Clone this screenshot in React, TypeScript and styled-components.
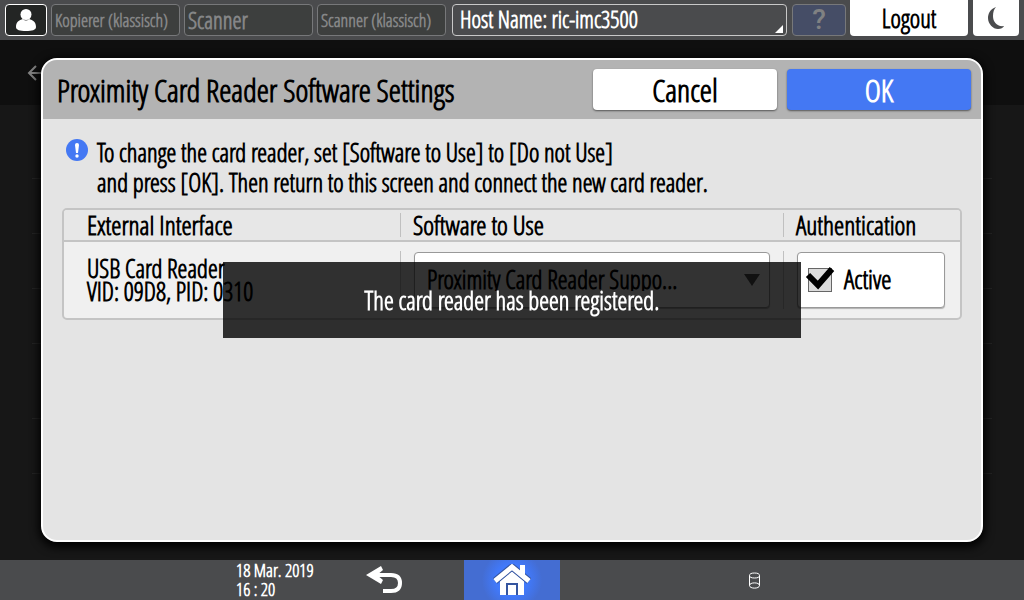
import React from "react";
import styled, { createGlobalStyle } from "styled-components";

const GlobalStyle = createGlobalStyle`
  *, *::before, *::after { box-sizing: border-box; }
  body {
    margin: 0;
    background: #171717;
    color: #000;
    font-family: "Open Sans Condensed Light", "Roboto Condensed", sans-serif;
    font-weight: 600;
    font-size: 25px;
    line-height: 30px;
  }
  button, input, select { font: inherit; color: inherit; margin: 0; padding: 0; }
  svg { display: block; }
`;

const Screen = styled.div`
  display: flex;
  flex-direction: column;
  min-height: 100vh;
`;

const TopBar = styled.header`
  display: flex;
  align-items: flex-start;
  gap: 4px;
  height: 40px;
  padding: 0 5px;
  background: #4a4b4d;
`;

const BarButton = styled.button`
  height: 32px;
  margin-top: 4px;
  border: 1px solid #77787a;
  border-radius: 4px;
`;

const UserButton = styled(BarButton)`
  display: grid;
  place-items: center;
  width: 42px;
  border-color: #fff;
  background: #232524;
`;

const AppButton = styled(BarButton)<{ $small?: boolean }>`
  flex: 0 1 129px;
  padding: 0 3px;
  overflow: hidden;
  white-space: nowrap;
  text-align: left;
  background: #3d3f3e;
  color: #858687;
  font-size: ${(p) => (p.$small ? 18 : 23)}px;
  line-height: 28px;
`;

const StatusButton = styled(BarButton)`
  display: flex;
  flex: 1;
  align-items: flex-end;
  justify-content: space-between;
  margin-left: 2px;
  padding: 0 3px 2px 7px;
  border-color: #c8c8c8;
  background: #4a4b4d;
  color: #fff;
  font-size: 23px;
  line-height: 28px;
  white-space: nowrap;
`;

const HelpButton = styled(BarButton)`
  width: 54px;
  margin-left: 1px;
  background: #454d66;
  color: #808182;
  font-family: Roboto, sans-serif;
  font-weight: 500;
  font-size: 28px;
  line-height: 28px;
`;

const SolidButton = styled.button`
  width: 118px;
  height: 36px;
  border: 0;
  border-radius: 0 0 4px 4px;
  background: #fff;
`;

const SleepButton = styled(SolidButton)`
  display: grid;
  place-items: center;
  width: 46px;
  margin-left: 1px;
`;

const Main = styled.main`
  display: grid;
  flex: 1;
  grid-template: minmax(0, 1fr) / minmax(0, 1fr);
  & > * { grid-area: 1 / 1; }
`;

const Backdrop = styled.div`
  overflow: hidden;
`;

const BackdropHeader = styled.div`
  display: flex;
  align-items: center;
  height: 65px;
  padding-left: 27px;
  background: #0f0f0f;
`;

const BackdropList = styled.ul`
  margin: 0 32px;
  padding: 19px 0 0;
  list-style: none;
`;

const BackdropRow = styled.li<{ $tall?: boolean }>`
  height: ${(p) => (p.$tall ? 75 : 55)}px;
  border-bottom: 1px solid #242424;
`;

const Dialog = styled.section`
  display: flex;
  flex-direction: column;
  margin: 18px 41px;
  overflow: hidden;
  border: 2px solid #fff;
  border-radius: 16px;
  background: #e4e4e4;
  box-shadow: 0 3px 10px 2px #000;
`;

const DialogHeader = styled.div`
  display: flex;
  align-items: center;
  gap: 10px;
  height: 59px;
  padding: 0 10px 0 14px;
  background: #b3b3b3;
`;

const Title = styled.h1`
  flex: 1;
  margin: 0;
  font-size: 31px;
  font-weight: 600;
  line-height: 40px;
  white-space: nowrap;
`;

const ActionButton = styled.button<{ $primary?: boolean }>`
  width: 184px;
  height: 41px;
  border: 0;
  border-radius: 4px;
  background: ${(p) => (p.$primary ? "#4478f3" : "#fff")};
  color: ${(p) => (p.$primary ? "#fff" : "#000")};
  box-shadow: 0 1px 2px #0008;
  font-size: 31px;
  line-height: 40px;
`;

const DialogBody = styled.div`
  padding: 18px 19px;
`;

const Notice = styled.div`
  display: flex;
  gap: 9px;
  padding: 0 4px 11px;
`;

const NoticeIcon = styled.svg`
  flex: none;
  margin-top: 2px;
`;

const NoticeText = styled.p`
  margin: 0;
`;

const Frame = styled.div`
  overflow: hidden;
  border: 2px solid #c4c4c4;
  border-radius: 5px;
  background: #f0f0f0;
`;

const Table = styled.table`
  width: 100%;
  border-spacing: 0;
  table-layout: fixed;
`;

const HeadCell = styled.th<{ $width?: number }>`
  width: ${(p) => (p.$width ? `${p.$width}px` : "auto")};
  height: 32px;
  padding: 0;
  border-bottom: 2px solid #c4c4c4;
  background: #e7e7e7;
  font-size: 26px;
  font-weight: 600;
  text-align: left;
`;

const BodyCell = styled.td`
  height: 76px;
  padding: 0 0 1px;
`;

const Cell = styled.div<{ $tall?: boolean; $divided?: boolean }>`
  display: flex;
  align-items: center;
  height: ${(p) => (p.$tall ? 58 : 24)}px;
  padding: 0 13px 0 ${(p) => (!p.$divided ? 23 : p.$tall ? 13 : 12)}px;
  border-left: ${(p) => (p.$divided ? "1px solid #c0c0c0" : "0")};
  line-height: 23px;
  white-space: nowrap;
`;

const Picker = styled.div`
  display: grid;
  flex: 1;
  align-items: center;
  & > * { grid-area: 1 / 1; }
`;

const Select = styled.select`
  width: 100%;
  height: 56px;
  padding: 0 12px;
  appearance: none;
  border: 1px solid #999;
  border-radius: 4px;
  background: #fff;
  box-shadow: 0 1px 1px #0004;
`;

const PickerArrow = styled.svg`
  justify-self: end;
  margin-right: 10px;
  pointer-events: none;
`;

const Toggle = styled.label`
  display: flex;
  flex: 1;
  align-items: center;
  gap: 12px;
  height: 56px;
  margin-right: 2px;
  padding-left: 10px;
  border: 1px solid #999;
  border-radius: 4px;
  background: #fff;
  box-shadow: 0 1px 1px #0004;
  font-size: 26px;
`;

const TickBox = styled.span`
  display: grid;
  place-items: center;
  & > * { grid-area: 1 / 1; }
`;

const Checkbox = styled.input`
  width: 24px;
  height: 24px;
  appearance: none;
  border: 1px solid #666;
  background: #dcdcdc;
`;

const Tick = styled.svg`
  width: 24px;
  height: 24px;
  overflow: visible;
  visibility: hidden;
  pointer-events: none;
  input:checked + & { visibility: visible; }
`;

const Toast = styled.div`
  position: fixed;
  top: 50%;
  left: 50%;
  width: 578px;
  max-width: 100%;
  padding: 23px 20px;
  transform: translate(-50%, -50%);
  background: rgba(0, 0, 0, 0.8);
  color: #fff;
  text-align: center;
`;

const BottomBar = styled.footer`
  display: grid;
  grid-template-columns: 1fr 96px 1fr;
  height: 40px;
  background: #4a4b4d;
  color: #fff;
`;

const BottomLeft = styled.div`
  display: flex;
  justify-content: flex-end;
  padding-right: 32px;
`;

const BottomRight = styled.div`
  display: flex;
  align-items: center;
  padding-left: 188px;
`;

const Clock = styled.time`
  width: 100px;
  font-size: 18px;
  line-height: 19px;
  padding-top: 1px;
`;

const ClockLine = styled.span`
  display: block;
`;

const NavButton = styled.button<{ $home?: boolean }>`
  display: grid;
  place-items: center;
  width: 96px;
  height: 40px;
  border: 0;
  background: ${(p) => (p.$home ? "radial-gradient(circle, #4179fa 16px, #446dd2 30px)" : "transparent")};
`;

const rows = [false, false, false, false, true, false];

export default function App() {
  return (
    <Screen>
      <GlobalStyle />
      <TopBar>
        <UserButton aria-label="User">
          <svg width="20" height="22" viewBox="0 0 20 22" fill="#fff">
            <ellipse cx="10" cy="5.5" rx="5.5" ry="5.5" />
            <path d="M0 18C0 13 3 11 7 10Q10 13 13 10C17 11 20 13 20 18C20 21 16 22 10 22S0 21 0 18Z" />
          </svg>
        </UserButton>
        <AppButton $small>Kopierer (klassisch)</AppButton>
        <AppButton>Scanner</AppButton>
        <AppButton $small>Scanner (klassisch)</AppButton>
        <StatusButton>
          Host Name: ric-imc3500
          <svg width="8" height="8" viewBox="0 0 8 8" fill="#fff"><path d="M8 0V8H0Z" /></svg>
        </StatusButton>
        <HelpButton aria-label="Help">?</HelpButton>
        <SolidButton>Logout</SolidButton>
        <SleepButton aria-label="Energy saver">
          <svg width="16" height="22" viewBox="0 0 16 22" fill="#4a4b4d">
            <path d="M8 0C2 2 0 7 0 11C0 17 5 22 10 22C13 22 15 21 16 19C9 20 5 15 5 9C5 5 6 2 8 0Z" />
          </svg>
        </SleepButton>
      </TopBar>

      <Main>
        <Backdrop aria-hidden="true">
          <BackdropHeader>
            <svg width="20" height="16" viewBox="0 0 20 16" fill="none" stroke="#808080" strokeWidth="2">
              <path d="M9 1L2 8L9 15M2 8H20" />
            </svg>
          </BackdropHeader>
          <BackdropList>
            {rows.map((tall, i) => <BackdropRow key={i} $tall={tall} />)}
          </BackdropList>
        </Backdrop>

        <Dialog role="dialog" aria-labelledby="dialog-title">
          <DialogHeader>
            <Title id="dialog-title">Proximity Card Reader Software Settings</Title>
            <ActionButton>Cancel</ActionButton>
            <ActionButton $primary>OK</ActionButton>
          </DialogHeader>
          <DialogBody>
            <Notice>
              <NoticeIcon width="22" height="22" viewBox="0 0 22 22">
                <circle cx="11" cy="11" r="11" fill="#4478f3" />
                <path d="M9 6Q9 4 11 4T13 6L12 14H10Z" fill="#fff" />
                <circle cx="11" cy="17" r="1.7" fill="#fff" />
              </NoticeIcon>
              <NoticeText>
                To change the card reader, set [Software to Use] to [Do not Use]
                <br />
                and press [OK]. Then return to this screen and connect the new card reader.
              </NoticeText>
            </Notice>
            <Frame>
              <Table>
                <thead>
                  <tr>
                    <HeadCell $width={336}><Cell>External Interface</Cell></HeadCell>
                    <HeadCell><Cell $divided id="software-head">Software to Use</Cell></HeadCell>
                    <HeadCell $width={177}><Cell $divided>Authentication</Cell></HeadCell>
                  </tr>
                </thead>
                <tbody>
                  <tr>
                    <BodyCell>
                      <Cell $tall>USB Card Reader<br />VID: 09D8, PID: 0310</Cell>
                    </BodyCell>
                    <BodyCell>
                      <Cell $tall $divided>
                        <Picker>
                          <Select aria-labelledby="software-head">
                            <option>Proximity Card Reader Suppo...</option>
                          </Select>
                          <PickerArrow width="16" height="12" viewBox="0 0 16 12" fill="#555">
                            <path d="M0 0H16L8 12Z" />
                          </PickerArrow>
                        </Picker>
                      </Cell>
                    </BodyCell>
                    <BodyCell>
                      <Cell $tall $divided>
                        <Toggle>
                          <TickBox>
                            <Checkbox type="checkbox" defaultChecked />
                            <Tick viewBox="0 0 24 24" fill="none" stroke="#000" strokeWidth="6">
                              <path d="M0 7L10 17L24 1" />
                            </Tick>
                          </TickBox>
                          Active
                        </Toggle>
                      </Cell>
                    </BodyCell>
                  </tr>
                </tbody>
              </Table>
            </Frame>
          </DialogBody>
        </Dialog>
      </Main>

      <BottomBar>
        <BottomLeft>
          <Clock dateTime="2019-03-18T16:20">
            <ClockLine>18 Mar. 2019</ClockLine>
            <ClockLine>16 : 20</ClockLine>
          </Clock>
          <NavButton aria-label="Back">
            <svg width="36" height="28" viewBox="0 0 36 28" fill="none" stroke="#fff" strokeWidth="4">
              <path d="M6 9H25C31 9 34 12 34 17S31 25 25 25H17" />
              <path d="M0 9L15 0L17 4L11 9L17 14L15 18Z" fill="#fff" stroke="none" />
            </svg>
          </NavButton>
        </BottomLeft>
        <NavButton $home aria-label="Home">
          <svg width="38" height="32" viewBox="0 0 38 32" fill="#fff">
            <path d="M7 17L19 7L31 17V31H7Z" />
            <path d="M14 31V20H24V31" fill="none" stroke="#35559f" strokeWidth="2" />
            <path d="M2 17L19 3L36 17" fill="none" stroke="#35559f" strokeWidth="7" />
            <path d="M27 1H32V14L27 10Z" />
            <path d="M2 17L19 3L36 17" fill="none" stroke="#fff" strokeWidth="5" />
          </svg>
        </NavButton>
        <BottomRight>
          <svg width="13" height="17" viewBox="0 0 13 17" fill="none" stroke="#fff">
            <ellipse cx="6.5" cy="3.5" rx="5" ry="2.5" />
            <path d="M1.5 3.5V13.5C1.5 17 11.5 17 11.5 13.5V3.5M1.5 13.5C1.5 10 11.5 10 11.5 13.5" />
          </svg>
        </BottomRight>
      </BottomBar>

      <Toast role="status">The card reader has been registered.</Toast>
    </Screen>
  );
}
